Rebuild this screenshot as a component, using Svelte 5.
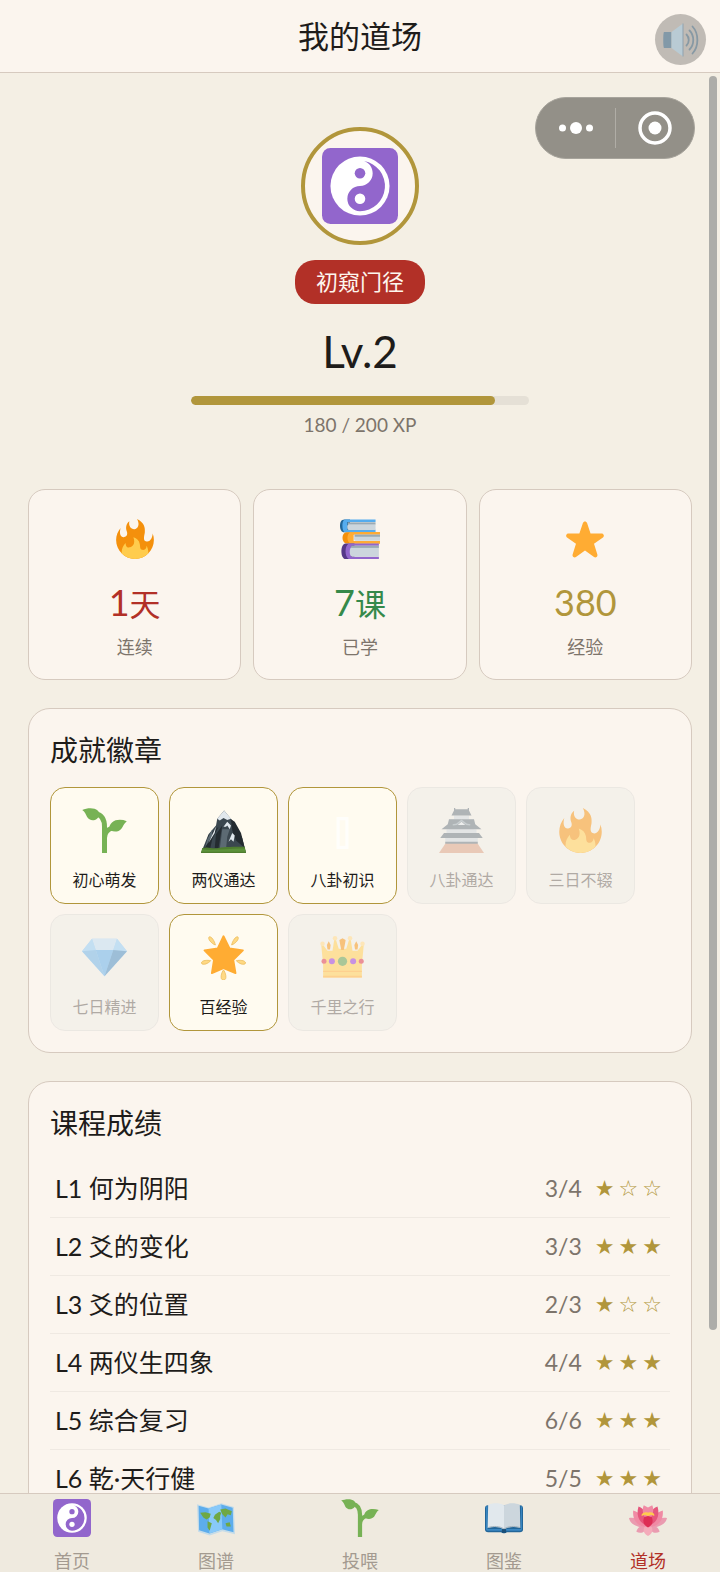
<script lang="ts">
interface Stat {
	icon: string
	value: number
	unit?: string
	label: string
	tone: string
}

interface Badge {
	icon: string
	name: string
	earned: boolean
}

interface Lesson {
	title: string
	score: string
	stars: number
}

const xp = 180
const nextLevel = 200

const stats: Stat[] = [
	{ icon: 'fire', value: 1, unit: '天', label: '连续', tone: 'red' },
	{ icon: 'books', value: 7, unit: '课', label: '已学', tone: 'green' },
	{ icon: 'star', value: 380, label: '经验', tone: 'gold' }
]

const badges: Badge[] = [
	{ icon: 'seedling', name: '初心萌发', earned: true },
	{ icon: 'mountain', name: '两仪通达', earned: true },
	{ icon: 'blank', name: '八卦初识', earned: true },
	{ icon: 'castle', name: '八卦通达', earned: false },
	{ icon: 'fire', name: '三日不辍', earned: false },
	{ icon: 'gem', name: '七日精进', earned: false },
	{ icon: 'glow', name: '百经验', earned: true },
	{ icon: 'crown', name: '千里之行', earned: false }
]

const lessons: Lesson[] = [
	{ title: 'L1 何为阴阳', score: '3/4', stars: 1 },
	{ title: 'L2 爻的变化', score: '3/3', stars: 3 },
	{ title: 'L3 爻的位置', score: '2/3', stars: 1 },
	{ title: 'L4 两仪生四象', score: '4/4', stars: 3 },
	{ title: 'L5 综合复习', score: '6/6', stars: 3 },
	{ title: 'L6 乾·天行健', score: '5/5', stars: 3 }
]

const tabs = [
	{ id: 'home', icon: 'yinyang', label: '首页' },
	{ id: 'atlas', icon: 'map', label: '图谱' },
	{ id: 'feed', icon: 'seedling', label: '投喂' },
	{ id: 'codex', icon: 'book', label: '图鉴' },
	{ id: 'dojo', icon: 'lotus', label: '道场' }
]

let active = $state('dojo')
let muted = $state(false)
</script>

{#snippet icon(name: string)}
	<svg class="icon" viewBox="0 0 36 36" aria-hidden="true">
		{#if name === 'yinyang'}
			<rect width="36" height="36" rx="4" fill="#9266cc" />
			<circle cx="18" cy="18" r="14" fill="#fff" />
			<path d="M18 30a6 6 0 0 1 0-12 6 6 0 0 0 6-6c0-2.600-1.500-4.800-4-5.800A12 12 0 0 1 18 30z" fill="#9266cc" />
			<circle cx="18" cy="12" r="2.500" fill="#9266cc" />
			<circle cx="18" cy="24" r="2.500" fill="#fff" />
		{:else if name === 'fire'}
			<path fill="#f4900c" d="M35 19c0-2.062-.367-4.039-1.040-5.868-.46 5.389-3.333 8.157-6.335 6.868-2.812-1.208-.917-5.917-.777-8.164.236-3.809-.012-8.169-6.931-11.794 2.875 5.500.333 8.917-2.333 9.125-2.958.231-5.667-2.542-4.667-7.042-3.238 2.386-3.332 6.402-2.333 9 1.042 2.708-.042 4.958-2.583 5.208-2.840.28-4.418-3.041-2.963-8.333C2.520 10.965 1 14.805 1 19c0 9.389 7.611 17 17 17s17-7.611 17-17z" />
			<path fill="#ffcc4d" d="M28.394 23.999c.148 3.084-2.561 4.293-4.019 3.709-2.106-.843-1.541-2.291-2.083-5.291s-2.625-5.083-5.708-6c2.250 6.333-1.247 8.667-3.080 9.084-1.872.426-3.753-.001-3.968-4.007C7.352 23.668 6 26.676 6 30c0 .368.023.73.055 1.090C9.125 34.124 13.342 36 18 36s8.875-1.876 11.945-4.910c.032-.36.055-.722.055-1.090 0-2.187-.584-4.236-1.606-6.001z" />
		{:else if name === 'books'}
			<path fill="#226699" d="M4 .5C1 .5 0 3 0 6s1 6 4 6h5V.5z" />
			<path fill="#55acee" d="M5 .5h27v2.200H6.500v7H32V12H5C3 12 2.200 9 2.200 6S3 .5 5 .5z" />
			<path fill="#ccd6dd" d="M8 4.500h24v5.500H8c-2 0-2-5.500 0-5.500z" />
			<path fill="#9aaab4" d="M7 3h25v1.800H7z" />
			<path fill="#f4900c" d="M6 12h30v2H12v6h24v2H6c-5 0-5-10 0-10z" />
			<path fill="#ffac33" d="M9 12h27v1.500H12v6.500h24v2H9c-3-2-3-8 0-10z" />
			<path fill="#ccd6dd" d="M14 15.500h22v4H14c-2 0-2-4 0-4z" />
			<path fill="#9aaab4" d="M13 14h23v2H13z" />
			<path fill="#553788" d="M5 22h8v14H5c-5 0-5-14 0-14z" />
			<path fill="#9266cc" d="M8 22h27v2H10v10h25v2H8c-4-2-4-12 0-14z" />
			<path fill="#ccd6dd" d="M11 25h24v9H11c-3 0-3-9 0-9z" />
			<path fill="#9aaab4" d="M10 24h25v2H10z" />
		{:else if name === 'star'}
			<path fill="#ffac33" d="M27.287 34.627c-.404 0-.806-.124-1.152-.371L18 28.422l-8.135 5.834c-.343.247-.746.371-1.148.371-.405 0-.81-.126-1.157-.38-.689-.5-.977-1.386-.713-2.195l3.034-9.792-8.062-5.681c-.685-.505-.968-1.393-.7-2.198.268-.805 1.012-1.351 1.859-1.362l9.947-.015 3.193-9.340c.272-.803 1.026-1.344 1.874-1.344s1.602.541 1.874 1.344l3.117 9.340 10.022.015c.848.011 1.592.557 1.859 1.362.268.806-.015 1.693-.7 2.198l-8.062 5.681 3.034 9.792c.264.809-.024 1.695-.713 2.195-.348.254-.753.38-1.157.38z" />
		{:else if name === 'seedling'}
			<path fill="none" stroke="#77b255" stroke-width="4" d="M11 4.500c5 1 7 5 7 10.500v21M18 24c0-4 2-6.500 6-8" />
			<path fill="#77b255" d="M.2 1.500C4-.2 10-.6 12.500 2c2 2 1.500 5-.5 6.500C9 11 5.500 9.500 4 7 3 5 2.500 3 .2 1.500zM35.800 10.500c-4-1.500-9-1.500-11.800 1-2.500 2.500-2.500 5-1 6.500 3 1.500 6.500 1 8.500-1.500 1.500-2 1.800-4 4.300-6z" />
		{:else if name === 'mountain'}
			<path fill="#3b474f" d="M18.500 2 13 8.500 12 14l-6 7L0 36h36l-3-12-2-4-6-10z" />
			<path fill="#242b30" d="M24 9l3 2 5 9 3 12-7-6-3-8zM14 15l-5 10-2 9H2l4-12zM17 14l-3 18h-3l1-11z" />
			<path fill="#5c6a73" d="M17 17l-2 16h5l1-10 2-6zM9 17l-4 8-2 7 6-10z" />
			<path fill="#e1e8ed" d="M18.500 2 13 8.500l2 1.500 3-2 3 1.500 3-1zM21 11l-3 4 2 0 1-1 2 3 1-3zM12 15l-6 13 5-8zM25 20l-3 7 2-2 2 2 1-5z" />
			<path fill="#4f7d2f" d="M1 32c5-1.500 8 1 13 0s12-1 21-1l1 5H0z" />
			<path fill="#5c913b" d="M1 33c12 1.500 22-1 34-.5l.8 2.500H.4z" />
		{:else if name === 'blank'}
			<rect x="14.500" y="8.500" width="7" height="23" fill="none" stroke="#fffefb" stroke-width="2.500" />
		{:else if name === 'castle'}
			<path fill="#ccd6dd" d="M12 6h12v5H12zM8 9h20v8H8zM6 17h24v3H6zM5 23h26v5H5z" />
			<path fill="#66757f" d="M12 0h1v1h10V0h1v2l2 4H10l2-4zM8 9h20l1 4 5 4H2l5-4zM4 20h28l3 4H1zM5 27h26v2H5z" />
			<path fill="none" stroke="#99aab5" stroke-width="1.200" d="m11 13.500 3-.5 4-3 4 3 3 .5" />
			<path fill="#e1e8ed" d="m18 11 3 2.500h-6z" />
			<path fill="#d99e82" d="M5 28.500h26L36 36H0z" />
		{:else if name === 'gem'}
			<path fill="#8ccaf7" d="M8 3h20l8 10-18 20L0 13z" />
			<path fill="#bdddf4" d="M8 3h20l-3 9H11z" />
			<path fill="#5dadec" d="m11 12 7 21 7-21z" />
			<path fill="#8ccaf7" d="m0 13 8-10 3 9zM36 13 28 3l-3 9z" />
			<path fill="#6ab1e8" d="m0 13 11-1 7 21z" />
			<path fill="#4289c1" d="m36 13-11-1-7 21z" />
		{:else if name === 'glow'}
			<path fill="#ffac33" stroke="#ffac33" stroke-width="1.500" stroke-linejoin="round" d="m18 1 4.800 9.800 10.700 1.500-7.700 7.600 1.800 10.600L18 26.500l-9.300 4 1.700-10.600L2.800 12.300l10.600-1.500z" />
			<g fill="#ffd983" stroke="#e9b95a" stroke-width=".6">
				<path d="M6.500 1.500c1.800-.8 4.500 3.500 5 6.500C8.500 7 5 3 6.500 1.500zM29.500 1.500c-1.800-.8-4.500 3.500-5 6.500 3-1 6.500-5 5-6.500zM.3 22.500c.3-2.500 5-2.500 7.500-2-2 2.500-6.500 4-7.500 2zM35.700 22.500c-.3-2.500-5-2.500-7.500-2 2 2.500 6.500 4 7.500 2zM18 28c-1.500 1.500-3.500 8 0 8s1.500-6.500 0-8z" />
			</g>
		{:else if name === 'crown'}
			<path fill="#ffcc4d" d="M2.500 34V24L1 8h1.500L6 12.500h4L11.500 3h1L15 11h6l2.500-8h1L26 12.500h4L33.500 8H35l-1.500 16v10z" />
			<path fill="#f4900c" d="m5.500 8 1.500-3 1.500 3-.5 3.500h-2zM15.500 4 18 2.500 20.500 4 20 7l-1 5h-2l-1-5zM27.500 8 29 5l1.500 3-.5 3.500h-2z" />
			<g fill="#ffd983">
				<circle cx="2" cy="7" r="1.800" />
				<circle cx="12" cy="2.500" r="1.800" />
				<circle cx="24" cy="2.500" r="1.800" />
				<circle cx="34" cy="7" r="1.800" />
			</g>
			<path fill="#ffac33" d="M2.500 28.500h31v1h-31zM2.500 32.500h31V34h-31z" />
			<circle cx="18" cy="21" r="3.700" fill="#5c9b45" />
			<circle cx="9.500" cy="21" r="2.400" fill="#9430d8" />
			<circle cx="26.500" cy="21" r="2.400" fill="#9430d8" />
			<circle cx="3.200" cy="21" r="2" fill="#dd2e44" />
			<circle cx="33" cy="21" r="2" fill="#dd2e44" />
		{:else if name === 'map'}
			<path fill="#c5dce9" d="m0 5 11 3 12-4 12 3.500 1 26-12-3-12 4L1 31z" />
			<path fill="#5dadec" d="m1.500 6.500 9.500 2.600L23 5.300l10.800 3 .8 23.200-10.800-2.800-12 4L2 29.500z" />
			<path fill="#88c9f9" d="m11 9 12-3.700 1 23.400-12.300 3.900z" />
			<path fill="#6fa845" d="m3 13 5-.5 5 1.500-1 3.500-3 2-3-2zM10 21l4 2-2 7-2-3zM15.500 18l1.500-3 4-3 2 1-1 3 0 3-2 4-2-3zM22 10l5-1 6 2.500-1 4-3-1-2 3-3-3zM27 23l4-1 1 4-4 0z" />
		{:else if name === 'book'}
			<path fill="#226699" d="M0 9c0-2 1-3 3-3h30c2 0 3 1 3 3v20c0 2-1 2.500-3 2.500H20.500c-1 1.200-4 1.200-5 0H3c-2 0-3-1-3-2.500z" />
			<path fill="#3b88c3" d="M1 8c0-1 .5-1.500 1.500-1.500v22H34V6.500c.7 0 1 .5 1 1.500v20.500c0 1-.5 1.500-1.500 1.500h-31C1.500 30 1 29.500 1 28.500z" />
			<path fill="#e1e8ed" d="M3 5.500c4-1.800 11-2 15 .5v23c-4-3-10-3-15.500-1.500z" />
			<path fill="#ccd6dd" d="M18 6c4-2.500 11-2.300 15-.5l.5 22c-5-1.500-11-1.500-15.500 1.500z" />
			<path fill="none" stroke="#99aab5" stroke-width=".8" d="M3 27c5-1.500 11-1.500 15 1.500 4-3 10-3 15-1.500" />
			<path fill="#1b4f78" d="M16 28.500h4v3.500h-4z" />
		{:else if name === 'lotus'}
			<g fill="#ea9bb0">
				<path d="M18 27C11 28 1 25 0 18c7-1 14 2 18 9zM18 27c7 1 17-2 18-9-7-1-14 2-18 9z" />
				<path d="M18 25c-5-1-10 1-11 6 4 2 9 1 11-6zM18 25c5-1 10 1 11 6-4 2-9 1-11-6z" />
			</g>
			<path fill="#f4abba" d="M18 23c-5 3-6 9 0 12 6-3 5-9 0-12z" />
			<path fill="#f08aa4" d="M18 26C9 27 3 21 4 11c7 2 12 7 14 15zM18 26c9 1 15-5 14-15-7 2-12 7-14 15z" />
			<path fill="#e5567c" d="M18 25C11 24 6 17 9 7c6 2 9 9 9 18zM18 25c7-1 12-8 9-18-6 2-9 9-9 18z" />
			<path fill="#f08aa4" d="M18 19C13 18 12 10 14 6l4 2 4-2c2 4 1 12-4 13z" />
			<path fill="#dd2e55" d="M18 27c-4-2-5.500-6-3.500-10l3.500-1 3.500 1c2 4 .5 8-3.500 10z" />
			<path fill="#ffcc4d" d="M12 16c-.5-3 4-4 6-3 3-1 6.500 0 6 3l-3-1-3 1-3-1z" />
		{:else if name === 'speaker'}
			<path fill="#8299a8" d="M1 10h7.500v16H1c-1 0-1-16 0-16z" />
			<path fill="#b9cbd4" d="M8.500 10 20 1.500v33L8.500 26z" />
			<path fill="#8fa2ad" d="M19.500 1.500h1v33h-1z" />
			<g fill="none" stroke="#8799a4" stroke-width="1.800" stroke-linecap="round">
				<path d="M23.500 12.500c3 3 3 8 0 11M26.500 8.500c5 5 5 14 0 19M29.500 4.500c6.500 7 6.500 20 0 27" />
			</g>
		{/if}
	</svg>
{/snippet}

<div class="page">
	<header class="topbar">
		<h1>我的道场</h1>
		<button class="sound" aria-label="声音" aria-pressed={!muted} onclick={() => (muted = !muted)}>
			{@render icon('speaker')}
		</button>
	</header>

	<main>
		<div class="scroll">
			<section class="profile">
				<div class="avatar">{@render icon('yinyang')}</div>
				<span class="rank">初窥门径</span>
				<div class="level">Lv.2</div>
				<div class="bar" role="progressbar" aria-label="XP" aria-valuenow={xp} aria-valuemax={nextLevel}>
					<div class="fill" style="width: {(xp / nextLevel) * 100}%"></div>
				</div>
				<div class="xp">{xp} / {nextLevel} XP</div>
			</section>

			<section class="stats">
				{#each stats as stat (stat.label)}
					<div class="stat">
						{@render icon(stat.icon)}
						<div class="value {stat.tone}">
							{stat.value}{#if stat.unit}<span class="unit">{stat.unit}</span>{/if}
						</div>
						<div class="label">{stat.label}</div>
					</div>
				{/each}
			</section>

			<section class="panel">
				<h2>成就徽章</h2>
				<ul class="badges">
					{#each badges as badge (badge.name)}
						<li class:earned={badge.earned}>
							{@render icon(badge.icon)}
							<span>{badge.name}</span>
						</li>
					{/each}
				</ul>
			</section>

			<section class="panel">
				<h2>课程成绩</h2>
				<ul class="lessons">
					{#each lessons as lesson (lesson.title)}
						<li>
							<span class="title">{lesson.title}</span>
							<span class="score">{lesson.score}</span>
							<span class="rating">
								{#each [1, 2, 3] as n (n)}
									<span>{n <= lesson.stars ? '★' : '☆'}</span>
								{/each}
							</span>
						</li>
					{/each}
				</ul>
			</section>
		</div>
		<div class="thumb"></div>
	</main>

	<nav>
		{#each tabs as tab (tab.id)}
			<button class:active={active === tab.id} onclick={() => (active = tab.id)}>
				{@render icon(tab.icon)}
				<span>{tab.label}</span>
			</button>
		{/each}
	</nav>

	<div class="capsule">
		<button aria-label="更多">
			<svg width="36" height="14" viewBox="0 0 36 14" fill="#fff">
				<circle cx="4.500" cy="7" r="3.500" />
				<circle cx="18" cy="7" r="6" />
				<circle cx="31.500" cy="7" r="3.500" />
			</svg>
		</button>
		<button aria-label="关闭">
			<svg width="34" height="34" viewBox="0 0 34 34" fill="#fff">
				<circle cx="17" cy="17" r="15" fill="none" stroke="#fff" stroke-width="3.500" />
				<circle cx="17" cy="17" r="6.500" />
			</svg>
		</button>
	</div>
</div>

<style>
:global(body) {
	margin: 0;
}

.page {
	--paper: #fbf5ee;
	--line: #d6cabf;
	--ink: #1e1c1a;
	--dim: #7d746b;
	--gold: #b1963b;
	--red: #b23027;
	position: relative;
	display: flex;
	flex-direction: column;
	height: 100vh;
	background: #f4efe4;
	color: var(--ink);
	font-family: Lato, 'Noto Sans CJK SC', sans-serif;
}

.page * {
	box-sizing: border-box;
}

h1,
h2 {
	margin: 0;
	font-weight: 400;
}

ul {
	list-style: none;
	margin: 0;
	padding: 0;
}

button {
	border: 0;
	padding: 0;
	background: none;
	color: inherit;
	font: inherit;
	cursor: pointer;
}

.icon {
	display: block;
	width: 40px;
	height: 40px;
}

.topbar {
	position: relative;
	flex: none;
	padding: 12px 0;
	text-align: center;
	background: var(--paper);
	border-bottom: 1px solid var(--line);
}

h1 {
	font-size: 31px;
	line-height: 48px;
}

.sound {
	position: absolute;
	top: 14px;
	right: 14px;
	display: grid;
	place-items: center;
	width: 51px;
	height: 51px;
	border-radius: 50%;
	background: #c0bbb5;
}

.sound .icon {
	width: 36px;
	height: 36px;
}

main {
	position: relative;
	flex: 1;
	min-height: 0;
}

.scroll {
	height: 100%;
	padding: 0 28px;
	overflow-y: auto;
	scrollbar-width: none;
}

.thumb {
	position: absolute;
	top: 3px;
	right: 3px;
	width: 8px;
	height: 88.3%;
	border-radius: 4px;
	background: #adada9;
}

.profile {
	display: flex;
	flex-direction: column;
	align-items: center;
	padding: 54px 0 52px;
}

.avatar {
	display: grid;
	place-items: center;
	width: 118px;
	height: 118px;
	border: 4px solid var(--gold);
	border-radius: 50%;
	background: var(--paper);
}

.avatar .icon {
	width: 76px;
	height: 76px;
}

.rank {
	margin-top: 15px;
	padding: 0 21px;
	border-radius: 20px;
	background: var(--red);
	color: #fdf6ee;
	font-size: 22px;
	line-height: 44px;
}

.level {
	margin-top: 20px;
	font-size: 44px;
	line-height: 54px;
}

.bar {
	width: 51%;
	height: 9px;
	margin-top: 18px;
	border-radius: 5px;
	background: #e5e0d6;
	overflow: hidden;
}

.fill {
	height: 100%;
	border-radius: 5px;
	background: var(--gold);
}

.xp {
	margin-top: 8px;
	color: var(--dim);
	font-size: 19px;
	line-height: 24px;
}

.stats {
	display: grid;
	grid-template-columns: repeat(3, 1fr);
	gap: 12px;
}

.stat {
	display: flex;
	flex-direction: column;
	align-items: center;
	padding: 29px 0 20px;
	border: 1px solid var(--line);
	border-radius: 17px;
	background: var(--paper);
}

.value {
	height: 44px;
	margin-top: 21px;
	font-size: 36px;
	line-height: 44px;
}

.unit {
	font-size: 31px;
}

.red {
	color: var(--red);
}

.green {
	color: #35894a;
}

.gold {
	color: var(--gold);
}

.label {
	margin-top: 11px;
	color: var(--dim);
	font-size: 18px;
	line-height: 24px;
}

.panel {
	margin-top: 28px;
	padding: 21px;
	border: 1px solid var(--line);
	border-radius: 22px;
	background: var(--paper);
}

h2 {
	margin-bottom: 17px;
	font-size: 28px;
	line-height: 40px;
}

.badges {
	display: flex;
	flex-wrap: wrap;
	gap: 10px;
}

.badges li {
	display: flex;
	flex-direction: column;
	align-items: center;
	width: 109px;
	padding: 20px 0 12px;
	border: 1px solid #dddcd8;
	border-radius: 15px;
	background: #efeee8;
	font-size: 16px;
	line-height: 22px;
	opacity: 0.5;
}

.badges li:not(.earned) span {
	color: #68625c;
}

.badges .earned {
	border-color: var(--gold);
	background: #fffbf0;
	opacity: 1;
}

.badges .icon {
	width: 45px;
	height: 45px;
	margin-bottom: 16px;
}

.lessons li {
	display: flex;
	align-items: center;
	padding: 0 8px 0 5px;
	border-bottom: 1px solid #efe9e2;
	font-size: 25px;
	line-height: 57px;
}

.title {
	flex: 1;
}

.score {
	color: var(--dim);
	font-size: 23px;
}

.rating {
	display: flex;
	gap: 4px;
	margin-left: 13px;
	color: var(--gold);
	font-family: 'DejaVu Sans', sans-serif;
	font-size: 22px;
}

nav {
	position: relative;
	flex: none;
	display: flex;
	border-top: 1px solid var(--line);
	background: #efeadf;
}

nav button {
	flex: 1;
	display: flex;
	flex-direction: column;
	align-items: center;
	gap: 14px;
	padding: 5px 0 1px;
	color: #a39a90;
	font-size: 18px;
	line-height: 20px;
}

nav .active {
	color: var(--red);
}

nav .icon {
	width: 38px;
	height: 38px;
}

.capsule {
	position: absolute;
	top: 97px;
	right: 25px;
	display: flex;
	width: 160px;
	height: 62px;
	border: 1px solid #a7a49c;
	border-radius: 31px;
	background: #939088;
}

.capsule button {
	flex: 1;
	display: grid;
	place-items: center;
}

/* short divider between the two halves */
.capsule::after {
	content: '';
	position: absolute;
	top: 10px;
	bottom: 10px;
	left: 50%;
	width: 1px;
	background: #b0ada6;
}
</style>
